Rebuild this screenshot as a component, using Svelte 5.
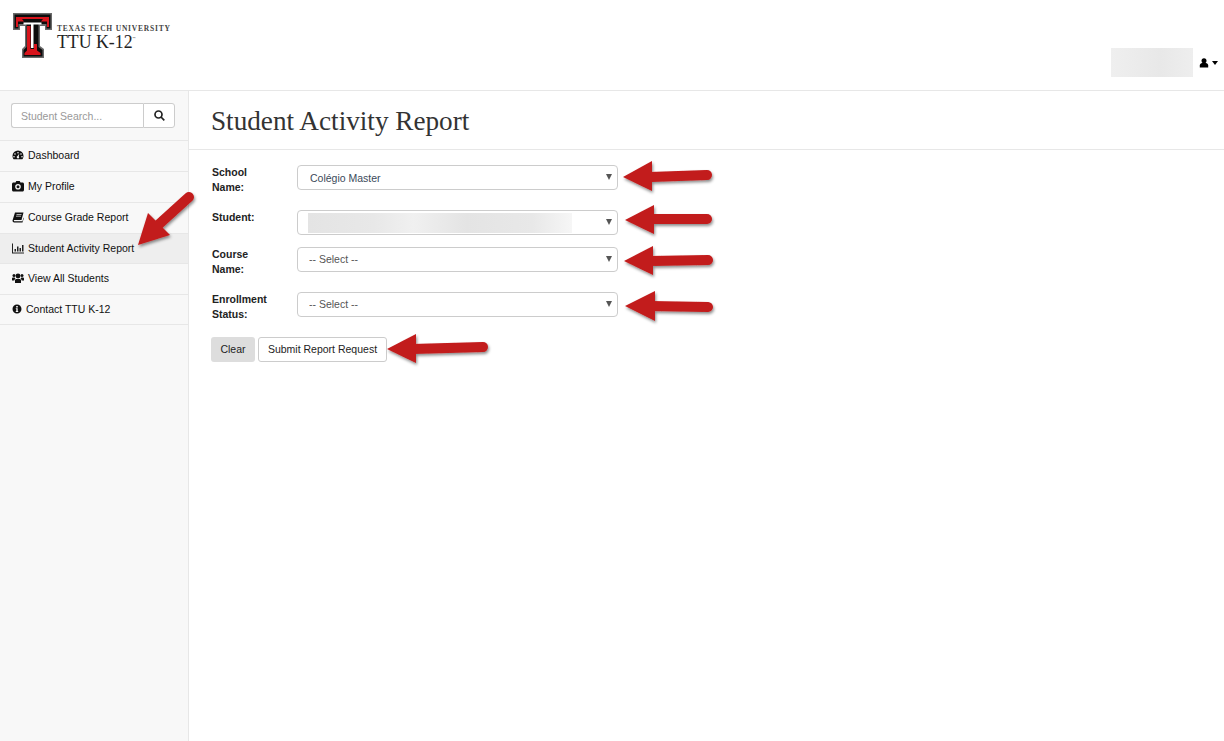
<script>
    const nav = [
        { label: 'Dashboard', icon: 'dashboard' },
        { label: 'My Profile', icon: 'camera' },
        { label: 'Course Grade Report', icon: 'book' },
        { label: 'Student Activity Report', icon: 'chart', active: true },
        { label: 'View All Students', icon: 'users' },
        { label: 'Contact TTU K-12', icon: 'info' }
    ]

    // callout arrows drawn over the page: tip, two head corners, shaft start and end
    const arrows = [
        { head: '623,177 652,161 652,191', shaft: 'M650 177 L707 175' },
        { head: '625,220 654,205 654,234', shaft: 'M650 219 L707 219' },
        { head: '624,261 653,246 653,275', shaft: 'M650 261 L708 260' },
        { head: '625,306 655,291 655,321', shaft: 'M650 306 L708 307' },
        { head: '387,349 416,334 416,363', shaft: 'M412 349 L483 347' },
        { head: '138,245 148,213 170,235', shaft: 'M157 226 L189 197' }
    ]
</script>

<div class="page">
    <header>
        <div class="brand">
            <svg class="logo" width="39" height="45" viewBox="0 0 39 45">
                <path fill="#6a6a6a" d="M0 0H39V17H32V13H27V33L31 36V45H9V36L12 33V13H7V17H0Z" />
                <path fill="#0c0c0c" d="M1.500 1.500H37.500V15.500H33.500V11H25.500V34L29.500 37V43.500H10.500V37L13.500 34V11H5.500V15.500H1.500Z" />
                <path fill="#d8141c" d="M3 4H36V14H34V8.500H28L30 6H9L11 8.500H5V14H3Z" />
                <path fill="#d8141c" d="M14 13H17.500V36H21V31H24V37.500L27.500 40V42H11.500V40L14 37.500Z" />
                <path fill="#fff" d="M10.500 9.500H28.500V11.500H20.500V35H18V11.500H10.500Z" />
            </svg>
            <div class="brand-text">
                <div class="university">TEXAS TECH UNIVERSITY</div>
                <div class="product">TTU K-12<sup>™</sup></div>
            </div>
        </div>
        <div class="account">
            <div class="blur-name"></div>
            <svg class="person" width="10" height="10" viewBox="0 0 10 10">
                <circle cx="5" cy="2.800" r="2.500" fill="#000" />
                <path fill="#000" d="M.8 9.600V7.600C.8 6 2 5 3.200 5H6.800C8 5 9.200 6 9.200 7.600V9.600Z" />
            </svg>
            <span class="caret"></span>
        </div>
    </header>

    <div class="body">
        <aside>
            <div class="search">
                <input type="text" placeholder="Student Search..." />
                <button aria-label="Search">
                    <svg width="11" height="11" viewBox="0 0 11 11" fill="none" stroke="#222" stroke-width="1.700">
                        <circle cx="4.500" cy="4.500" r="3.500" />
                        <path d="M7 7L10.300 10.300" />
                    </svg>
                </button>
            </div>
            <ul>
                {#each nav as item}
                    <li class:active={item.active}>
                        <svg class="icon" class:narrow={item.icon == 'info'} width="12" height="12" viewBox="0 0 12 12">
                            {#if item.icon == 'dashboard'}
                                <path fill="#111" fill-rule="evenodd" d="M6 1.500A5.500 5.500 0 0 0 .5 7C.5 8.300 1 9.500 1.700 10.300H10.300C11 9.500 11.500 8.300 11.500 7A5.500 5.500 0 0 0 6 1.500ZM6 3A.8.8 0 1 1 6 4.600.8.8 0 0 1 6 3ZM3 4.200A.8.8 0 1 1 3 5.800.8.8 0 0 1 3 4.200ZM9 4.200A.8.8 0 1 1 9 5.800.8.8 0 0 1 9 4.200ZM2 7A.8.8 0 1 1 2 8.600.8.8 0 0 1 2 7ZM10 7A.8.8 0 1 1 10 8.600.8.8 0 0 1 10 7ZM7.400 4.600L6.700 7.300A1.200 1.200 0 1 1 5.500 7.100Z" />
                            {:else if item.icon == 'camera'}
                                <path fill="#111" fill-rule="evenodd" d="M1.500 2.500H3.500L4.300 1H7.700L8.500 2.500H10.500C11.300 2.500 12 3.100 12 4V10C12 10.800 11.300 11.500 10.500 11.500H1.500C.7 11.500 0 10.800 0 10V4C0 3.100.7 2.500 1.500 2.500ZM6 3.900A2.800 2.800 0 1 0 6 9.500 2.800 2.800 0 0 0 6 3.900ZM6 5.200A1.500 1.500 0 1 1 6 8.200 1.500 1.500 0 0 1 6 5.200Z" />
                            {:else if item.icon == 'book'}
                                <path fill="#111" d="M3 1.500H11.500L9.500 9H2.500C2 9 1.700 9.500 2 10C2.100 10.200 2.400 10.300 2.700 10.300H10.500L11.500 6.500 11.800 7.200 10.500 11.500H2.300C1.300 11.500.5 10.500.5 9.500Z" />
                                <path stroke="#f8f8f8" stroke-width=".7" d="M4.500 3.500H9.500M4 5.200H9" />
                            {:else if item.icon == 'chart'}
                                <path fill="#222" d="M0 1.500H1V10.500H12V11.500H0ZM2.500 7H4V9.500H2.500ZM5 4.500H6.500V9.500H5ZM7.500 6H9V9.500H7.500ZM10 3H11.500V9.500H10Z" />
                            {:else if item.icon == 'users'}
                                <circle cx="6" cy="4" r="2.400" fill="#111" />
                                <circle cx="2" cy="3.500" r="1.500" fill="#111" />
                                <circle cx="10" cy="3.500" r="1.500" fill="#111" />
                                <path fill="#111" d="M0 8.500V6.500C0 5.800.5 5.400 1.200 5.400H2.800C2.900 6 3.200 6.500 3.500 6.800 2.800 7.200 2.300 7.800 2.300 8.500ZM12 8.500V6.500C12 5.800 11.500 5.400 10.800 5.400H9.200C9.100 6 8.800 6.500 8.500 6.800 9.200 7.200 9.700 7.800 9.700 8.500ZM3 11V8.500C3 7.500 3.700 7 4.500 7H7.500C8.300 7 9 7.500 9 8.500V11Z" />
                            {:else}
                                <path fill="#111" fill-rule="evenodd" d="M5 1.500A4.500 4.500 0 1 1 5 10.500 4.500 4.500 0 0 1 5 1.500ZM4.200 3V4.400H5.800V3ZM3.800 5.200V6H4.300V8H3.800V9H6.200V8H5.700V5.200Z" />
                            {/if}
                        </svg>
                        {item.label}
                    </li>
                {/each}
            </ul>
        </aside>

        <main>
            <h1>Student Activity Report</h1>
            <form>
                <div class="row">
                    <label for="school">School Name:</label>
                    <div class="select-wrap">
                        <select id="school" class="school"><option>Colégio Master</option></select>
                        <span class="arrow"></span>
                    </div>
                </div>
                <div class="row short">
                    <label for="student">Student:</label>
                    <div class="select-wrap">
                        <select id="student"><option></option></select>
                        <div class="blur-student"></div>
                        <span class="arrow"></span>
                    </div>
                </div>
                <div class="row">
                    <label for="course">Course Name:</label>
                    <div class="select-wrap">
                        <select id="course"><option>-- Select --</option></select>
                        <span class="arrow"></span>
                    </div>
                </div>
                <div class="row">
                    <label for="status">Enrollment Status:</label>
                    <div class="select-wrap">
                        <select id="status"><option>-- Select --</option></select>
                        <span class="arrow"></span>
                    </div>
                </div>
                <div class="buttons">
                    <button type="button" class="clear">Clear</button>
                    <button type="button" class="submit">Submit Report Request</button>
                </div>
            </form>
        </main>
    </div>

    <svg class="callouts" width="1224" height="741" viewBox="0 0 1224 741">
        <defs>
            <filter id="shadow" x="-20%" y="-20%" width="150%" height="150%">
                <feDropShadow dx="1" dy="2" stdDeviation="1.500" flood-color="#000" flood-opacity=".45" />
            </filter>
        </defs>
        {#each arrows as arrow}
            <g filter="url(#shadow)">
                <path d={arrow.shaft} fill="none" stroke="#c21b1b" stroke-width="10" stroke-linecap="round" />
                <polygon points={arrow.head} fill="#c21b1b" />
            </g>
        {/each}
    </svg>
</div>

<style>
    :global(body) {
        margin: 0;
        overflow: hidden;
        background: #fff;
        font-family: "Liberation Sans", Arial, sans-serif;
        font-size: 12px;
        color: #222;
    }

    .page {
        position: relative;
        height: 741px;
        overflow: hidden;
    }

    header {
        display: flex;
        justify-content: space-between;
        height: 90px;
        border-bottom: 1px solid #e7e7e7;
    }

    .brand {
        display: flex;
        align-items: flex-start;
        padding: 13px 0 0 13px;
    }

    .brand-text {
        margin: 11px 0 0 5px;
        font-family: "Liberation Serif", serif;
        color: #222;
    }

    .university {
        font-size: 7.500px;
        font-weight: bold;
        letter-spacing: .8px;
        line-height: 9px;
        white-space: nowrap;
        color: #444;
    }

    .product {
        font-size: 17.800px;
        line-height: 19px;
    }

    .product sup {
        font-size: 3px;
        vertical-align: 9px;
        line-height: 0;
    }

    .account {
        display: flex;
        align-items: center;
        align-self: flex-end;
        height: 29px;
        margin-bottom: 13px;
        padding-right: 6px;
    }

    .blur-name {
        width: 82px;
        height: 29px;
        margin-right: 6px;
        background: linear-gradient(90deg, #efefef, #e8e8e8 60%, #eeeeee);
    }

    .person {
        margin-right: 2px;
    }

    .caret {
        width: 0;
        height: 0;
        margin-left: 1px;
        border-top: 4px solid #000;
        border-left: 3.500px solid transparent;
        border-right: 3.500px solid transparent;
    }

    .body {
        display: flex;
        height: 650px;
    }

    aside {
        flex: none;
        width: 188px;
        background: #f8f8f8;
        border-right: 1px solid #e7e7e7;
    }

    .search {
        display: flex;
        padding: 12px 13px 12px 11px;
        border-bottom: 1px solid #e7e7e7;
    }

    .search input {
        flex: 1;
        min-width: 0;
        box-sizing: border-box;
        height: 25px;
        padding: 0 9px;
        border: 1px solid #ccc;
        border-right: none;
        border-radius: 3px 0 0 3px;
        font-family: inherit;
        font-size: 10.500px;
        background: #fff;
    }

    .search input::placeholder {
        color: #999;
        opacity: 1;
    }

    .search button {
        display: flex;
        align-items: center;
        justify-content: center;
        box-sizing: border-box;
        width: 32px;
        height: 25px;
        padding: 0;
        border: 1px solid #ccc;
        border-radius: 0 3px 3px 0;
        background: #fff;
    }

    ul {
        margin: 0;
        padding: 0;
        list-style: none;
    }

    li {
        display: flex;
        align-items: center;
        box-sizing: border-box;
        height: 31px;
        padding: 0 0 2px 12px;
        border-bottom: 1px solid #e7e7e7;
        font-size: 10.500px;
        color: #111;
    }

    li:nth-child(4), li:nth-child(6) {
        height: 30px;
    }

    li.active {
        background: #eee;
    }

    .icon {
        flex: none;
        margin-right: 4px;
    }

    .icon.narrow {
        margin-right: 2px;
    }

    main {
        flex: 1;
    }

    h1 {
        box-sizing: border-box;
        margin: 0;
        height: 59px;
        padding: 1px 0 0 22px;
        border-bottom: 1px solid #e7e7e7;
        font-family: "Liberation Serif", serif;
        font-size: 27.200px;
        font-weight: normal;
        line-height: 58px;
        color: #333;
    }

    form {
        padding: 15px 0 0 22px;
    }

    .row {
        display: flex;
        margin-bottom: 15px;
    }

    .row.short {
        margin-bottom: 12px;
    }

    label {
        flex: none;
        width: 86px;
        height: 30px;
        padding: 0 30px 0 1px;
        box-sizing: border-box;
        font-size: 10.500px;
        font-weight: bold;
        line-height: 15px;
    }

    .short label {
        height: 25px;
        line-height: 14px;
    }

    .select-wrap {
        position: relative;
        width: 321px;
        height: 25px;
    }

    select {
        display: block;
        appearance: none;
        box-sizing: border-box;
        width: 100%;
        height: 25px;
        padding: 0 11px 2px;
        border: 1px solid #ccc;
        border-radius: 4px;
        background: #fff;
        font-family: inherit;
        font-size: 10.500px;
        color: #555;
    }

    select.school {
        padding: 0 11px 0 12px;
        color: #3b4a5a;
    }

    .arrow {
        position: absolute;
        top: 9px;
        right: 6px;
        border-top: 6px solid #555;
        border-left: 3px solid transparent;
        border-right: 3px solid transparent;
    }

    .blur-student {
        position: absolute;
        top: 3px;
        left: 11px;
        width: 264px;
        height: 20px;
        background: linear-gradient(90deg, #e4e4e4, #e8e8e8 25%, #f0f0f0 40%, #e4e4e4 60%, #e8e8e8 85%, #f6f6f6);
    }

    .buttons {
        display: flex;
        gap: 3px;
    }

    .buttons button {
        box-sizing: border-box;
        height: 25px;
        padding: 0 0 2px;
        border-radius: 3px;
        font-family: inherit;
        font-size: 10.500px;
        color: #222;
    }

    .clear {
        width: 44px;
        border: none;
        background: #ddd;
    }

    .submit {
        width: 129px;
        border: 1px solid #ccc;
        background: #fff;
    }

    .callouts {
        position: absolute;
        top: 0;
        left: 0;
        pointer-events: none;
    }
</style>
